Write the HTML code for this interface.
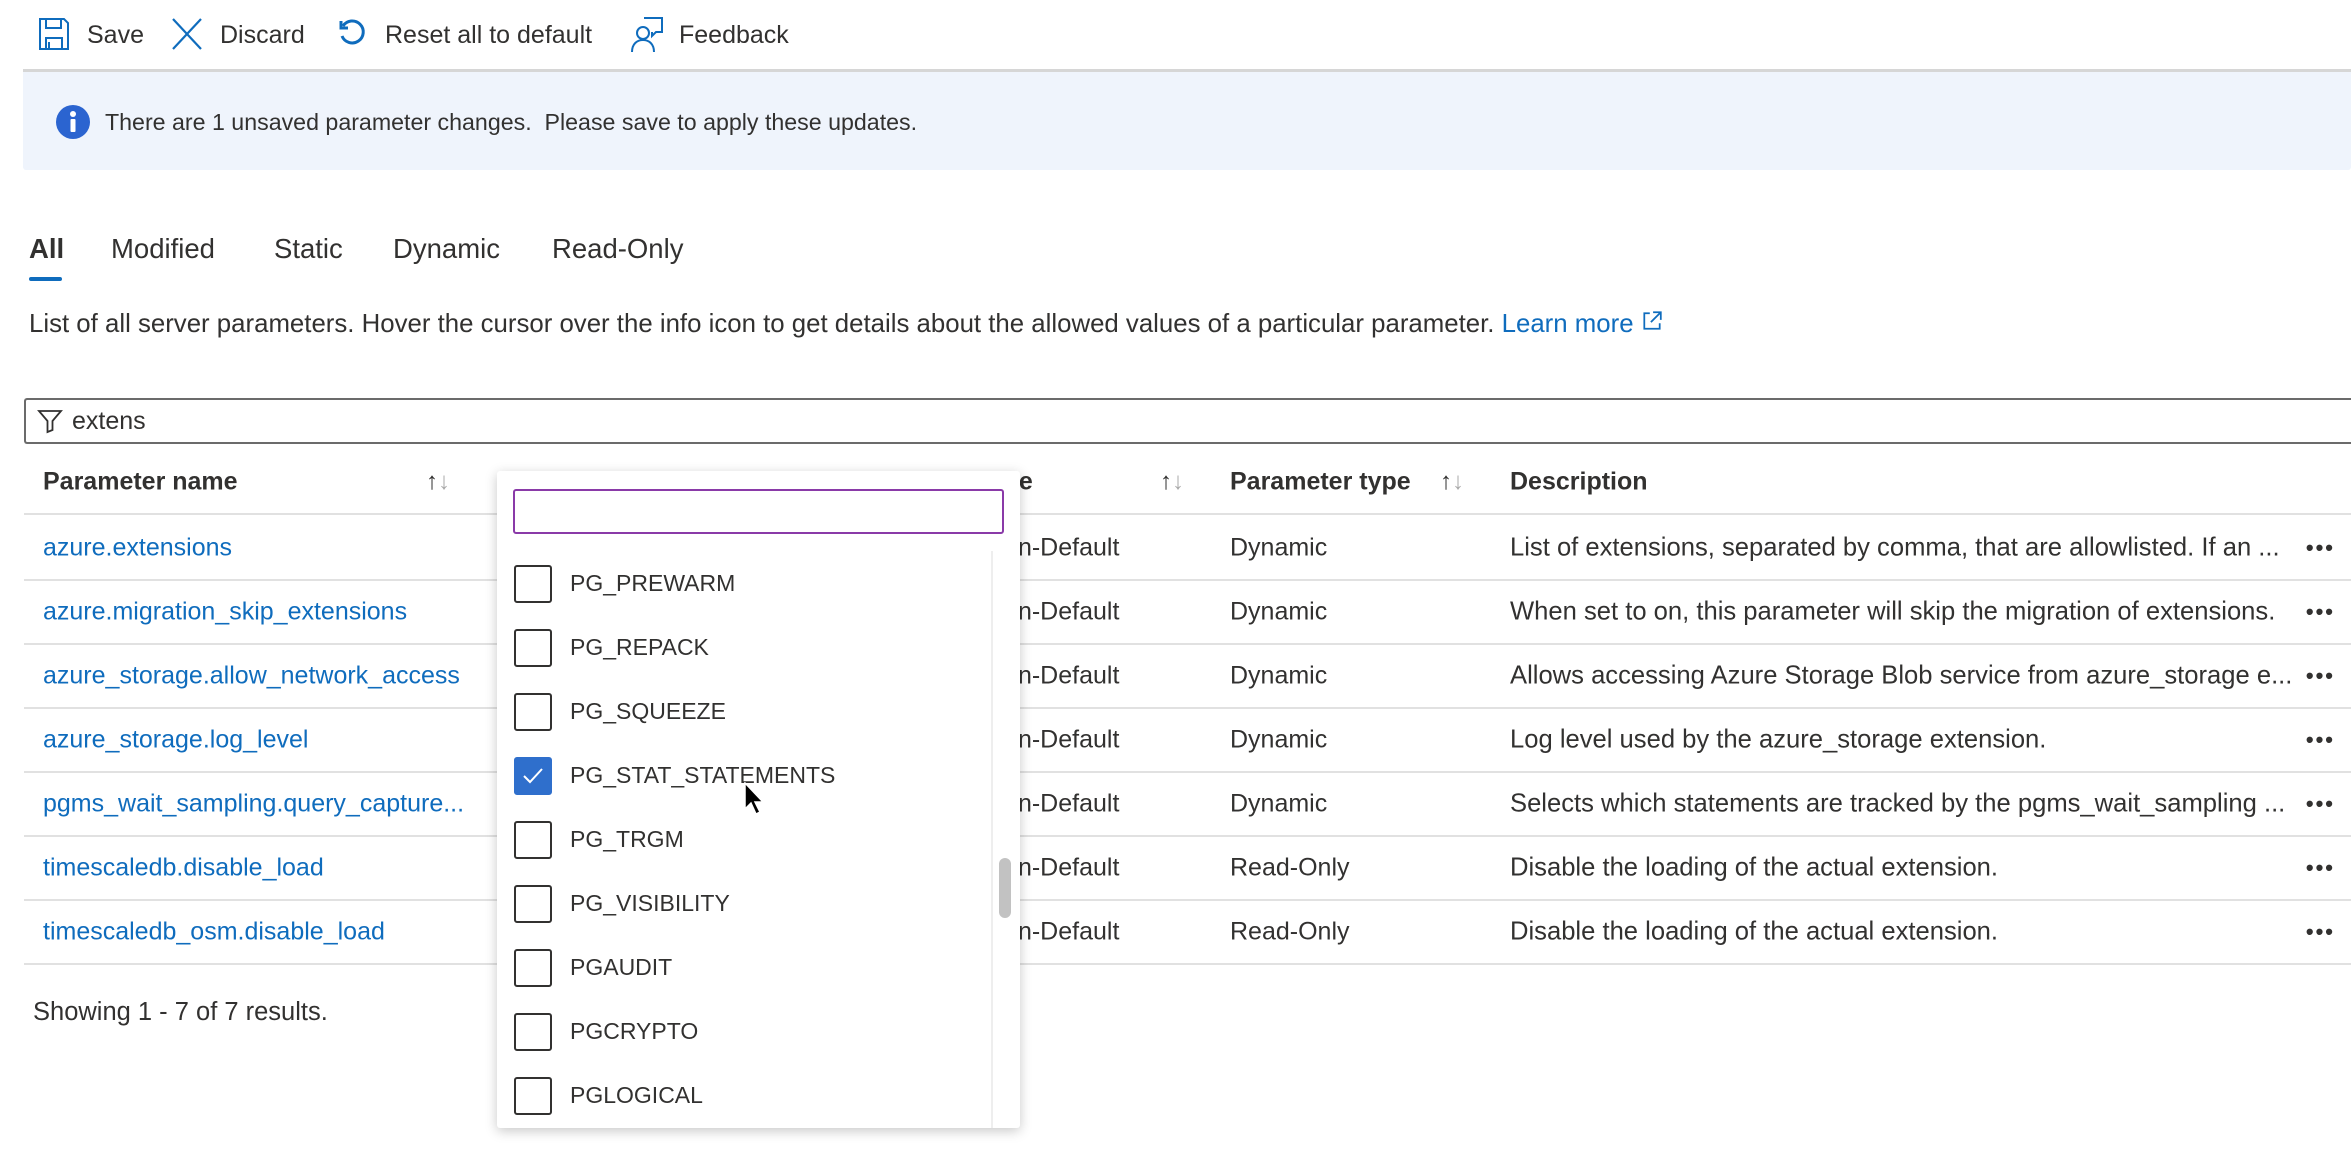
<!DOCTYPE html>
<html><head><meta charset="utf-8"><style>
*{margin:0;padding:0;box-sizing:border-box}
body{width:2351px;height:1149px;background:#fff;font-family:"Liberation Sans",sans-serif;color:#323130;position:relative;overflow:hidden}
.a{position:absolute;white-space:nowrap}
.tb{font-size:25px;top:21px}
.link{color:#0f6cbd}
.row{position:absolute;left:24px;right:0;height:64px;border-bottom:2px solid #e1e1e1}
.cell{position:absolute;font-size:25px;top:50%;transform:translateY(-50%);white-space:nowrap}
.ds{font-size:25.6px}
.hd{font-weight:bold}
.sort{font-size:24px;color:#323130}
.sort span{color:#aaa}
.dots{position:absolute;right:16px;top:50%;transform:translateY(-50%);font-size:22px;letter-spacing:2px;font-weight:bold}
.cb{position:absolute;left:514px;width:38px;height:38px;border:2px solid #323130;border-radius:3px;background:#fff}
.lab{position:absolute;left:570px;font-size:23px;white-space:nowrap}
</style></head><body>

<!-- toolbar -->
<svg class="a" style="left:38px;top:17px" width="32" height="34" viewBox="0 0 32 34" fill="none" stroke="#0f6cbd" stroke-width="2"><path d="M2 2h24l4 4v26H2z"/><path d="M8 2v9h15V2"/><path d="M8 32V21h16v11"/><path d="M11 25v7"/></svg>
<div class="a tb" style="left:87px">Save</div>
<svg class="a" style="left:170px;top:17px" width="34" height="34" viewBox="0 0 34 34" stroke="#0f6cbd" stroke-width="2.2"><path d="M3 2l28 30M31 2L3 32"/></svg>
<div class="a tb" style="left:220px">Discard</div>
<svg class="a" style="left:337px;top:18px" width="30" height="30" viewBox="0 0 30 30" fill="none" stroke="#0f6cbd" stroke-width="3"><path d="M6 8a11 11 0 1 1-1 10"/><path d="M4 3v7h7"/></svg>
<div class="a tb" style="left:385px">Reset all to default</div>
<svg class="a" style="left:630px;top:15px" width="34" height="38" viewBox="0 0 34 38" fill="none" stroke="#0f6cbd" stroke-width="2"><path d="M14 3h18v14h-6l-4 4v-4"/><circle cx="13" cy="18" r="6"/><path d="M2 37c0-8 5-12 11-12s11 4 11 12"/></svg>
<div class="a tb" style="left:679px">Feedback</div>

<!-- banner -->
<div class="a" style="left:23px;top:69px;right:0;height:3px;background:#d6d6d6"></div>
<div class="a" style="left:23px;top:72px;right:0;height:98px;background:#eff4fc;border-radius:0 0 3px 3px"></div>
<svg class="a" style="left:55px;top:104px" width="36" height="36" viewBox="0 0 36 36"><circle cx="18" cy="18" r="17" fill="#2b64d0"/><rect x="15.5" y="15" width="5" height="13" rx="1" fill="#fff"/><circle cx="18" cy="10" r="3" fill="#fff"/></svg>
<div class="a" style="left:105px;top:109px;font-size:23.2px">There are 1 unsaved parameter changes.&nbsp; Please save to apply these updates.</div>

<!-- tabs -->
<div class="a" style="left:29px;top:233px;font-size:27.5px;font-weight:bold">All</div>
<div class="a" style="left:29px;top:277px;width:33px;height:4px;background:#0f6cbd;border-radius:2px"></div>
<div class="a" style="left:111px;top:233px;font-size:27.5px">Modified</div>
<div class="a" style="left:274px;top:233px;font-size:27.5px">Static</div>
<div class="a" style="left:393px;top:233px;font-size:27.5px">Dynamic</div>
<div class="a" style="left:552px;top:233px;font-size:27.5px">Read-Only</div>

<div class="a" style="left:29px;top:310px;font-size:25.8px">List of all server parameters. Hover the cursor over the info icon to get details about the allowed values of a particular parameter. <span class="link">Learn more</span> <svg width="22" height="22" viewBox="0 0 20 20" fill="none" stroke="#0f6cbd" stroke-width="1.6"><path d="M8 3H3v14h14v-5M11 2h7v7M18 2L9 11"/></svg></div>

<!-- filter -->
<div class="a" style="left:24px;top:398px;right:0;height:46px;border:2px solid #6b6b6b;border-right:none;border-radius:3px 0 0 3px"></div>
<svg class="a" style="left:37px;top:408px" width="26" height="26" viewBox="0 0 26 26" fill="none" stroke="#323130" stroke-width="1.8"><path d="M2 3h22l-8.5 10v9l-5 2V13z"/></svg>
<div class="a" style="left:72px;top:407px;font-size:25px">extens</div>

<!-- header -->
<div class="row" style="top:451px">
  <div class="cell hd" style="left:19px">Parameter name</div>
  <div class="cell sort" style="left:402px">↑<span>↓</span></div>
  <div class="cell hd" style="left:924px">Source</div>
  <div class="cell sort" style="left:1136px">↑<span>↓</span></div>
  <div class="cell hd" style="left:1206px">Parameter type</div>
  <div class="cell sort" style="left:1416px">↑<span>↓</span></div>
  <div class="cell hd" style="left:1486px">Description</div>
</div>

<div class="row" style="top:517px"><div class="cell link" style="left:19px">azure.extensions</div><div class="cell" style="left:962px">Non-Default</div><div class="cell" style="left:1206px">Dynamic</div><div class="cell ds" style="left:1486px">List of extensions, separated by comma, that are allowlisted. If an ...</div><div class="dots">•••</div></div>
<div class="row" style="top:581px"><div class="cell link" style="left:19px">azure.migration_skip_extensions</div><div class="cell" style="left:962px">Non-Default</div><div class="cell" style="left:1206px">Dynamic</div><div class="cell ds" style="left:1486px">When set to on, this parameter will skip the migration of extensions.</div><div class="dots">•••</div></div>
<div class="row" style="top:645px"><div class="cell link" style="left:19px">azure_storage.allow_network_access</div><div class="cell" style="left:962px">Non-Default</div><div class="cell" style="left:1206px">Dynamic</div><div class="cell ds" style="left:1486px">Allows accessing Azure Storage Blob service from azure_storage e...</div><div class="dots">•••</div></div>
<div class="row" style="top:709px"><div class="cell link" style="left:19px">azure_storage.log_level</div><div class="cell" style="left:962px">Non-Default</div><div class="cell" style="left:1206px">Dynamic</div><div class="cell ds" style="left:1486px">Log level used by the azure_storage extension.</div><div class="dots">•••</div></div>
<div class="row" style="top:773px"><div class="cell link" style="left:19px">pgms_wait_sampling.query_capture...</div><div class="cell" style="left:962px">Non-Default</div><div class="cell" style="left:1206px">Dynamic</div><div class="cell ds" style="left:1486px">Selects which statements are tracked by the pgms_wait_sampling ...</div><div class="dots">•••</div></div>
<div class="row" style="top:837px"><div class="cell link" style="left:19px">timescaledb.disable_load</div><div class="cell" style="left:962px">Non-Default</div><div class="cell" style="left:1206px">Read-Only</div><div class="cell ds" style="left:1486px">Disable the loading of the actual extension.</div><div class="dots">•••</div></div>
<div class="row" style="top:901px"><div class="cell link" style="left:19px">timescaledb_osm.disable_load</div><div class="cell" style="left:962px">Non-Default</div><div class="cell" style="left:1206px">Read-Only</div><div class="cell ds" style="left:1486px">Disable the loading of the actual extension.</div><div class="dots">•••</div></div>

<div class="a" style="left:33px;top:998px;font-size:25.5px">Showing 1 - 7 of 7 results.</div>

<!-- dropdown -->
<div class="a" style="left:497px;top:471px;width:523px;height:657px;background:#fff;box-shadow:0 3px 12px rgba(0,0,0,.22);border-radius:3px;overflow:hidden">
  <div class="a" style="left:16px;top:18px;width:491px;height:45px;border:2px solid #8a3aa8;border-radius:3px"></div>
  <div class="a" style="left:494px;top:80px;width:2px;height:600px;background:#eee"></div>
  <div class="a" style="left:502px;top:387px;width:12px;height:60px;background:#c2c2c2;border-radius:6px"></div>
</div>
<div class="cb" style="top:565px"></div><div class="lab" style="top:570px">PG_PREWARM</div>
<div class="cb" style="top:629px"></div><div class="lab" style="top:634px">PG_REPACK</div>
<div class="cb" style="top:693px"></div><div class="lab" style="top:698px">PG_SQUEEZE</div>
<div class="cb" style="top:757px;background:#2f6fcc;border-color:#2f6fcc"><svg width="34" height="34" viewBox="0 0 34 34" fill="none" stroke="#fff" stroke-width="2"><path d="M8 17l6 6 12-13"/></svg></div><div class="lab" style="top:762px">PG_STAT_STATEMENTS</div>
<div class="cb" style="top:821px"></div><div class="lab" style="top:826px">PG_TRGM</div>
<div class="cb" style="top:885px"></div><div class="lab" style="top:890px">PG_VISIBILITY</div>
<div class="cb" style="top:949px"></div><div class="lab" style="top:954px">PGAUDIT</div>
<div class="cb" style="top:1013px"></div><div class="lab" style="top:1018px">PGCRYPTO</div>
<div class="cb" style="top:1077px"></div><div class="lab" style="top:1082px">PGLOGICAL</div>

<svg class="a" style="left:744px;top:782px" width="22" height="34" viewBox="0 0 22 34"><path d="M1 1v26l6-6 5 11 4-2-5-10h8z" fill="#000" stroke="#fff" stroke-width="1.5"/></svg>
</body></html>
